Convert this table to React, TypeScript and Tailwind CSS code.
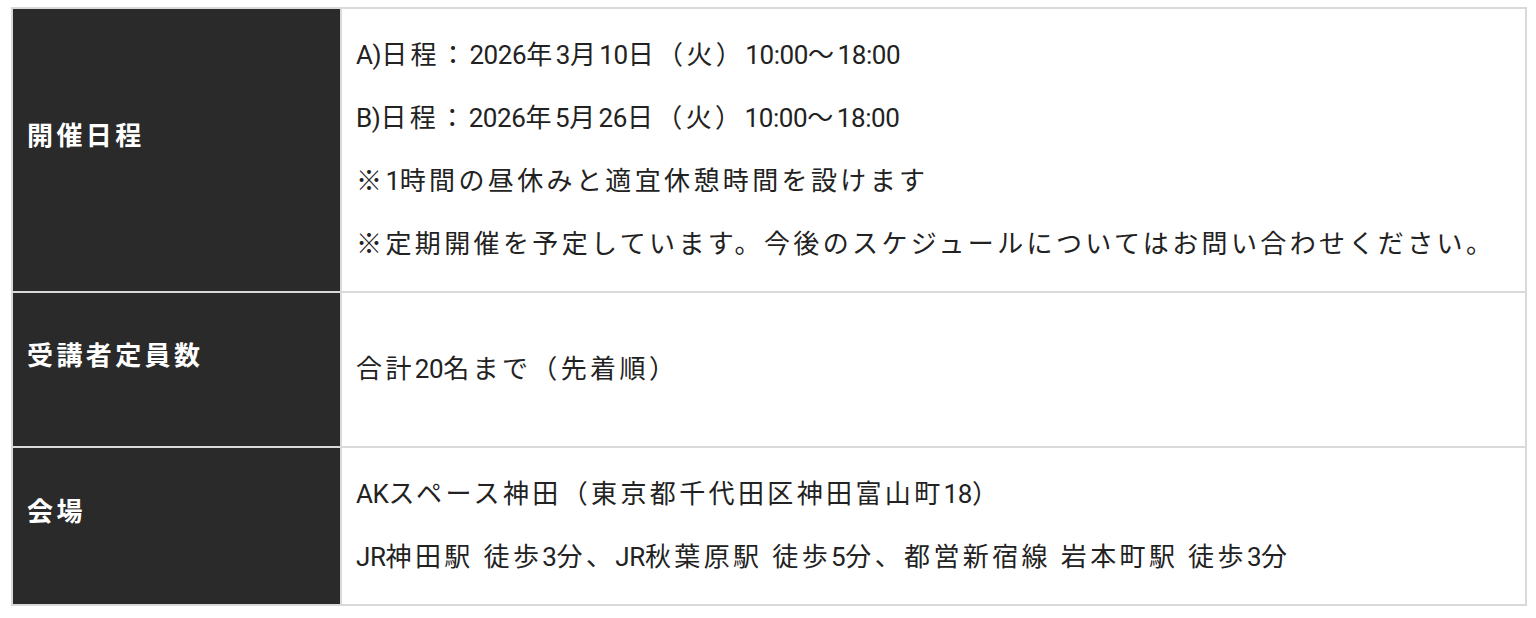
const rows = [
  {
    label: "開催日程",
    lines: [
      "A)日程：2026年3月10日（火）10:00～18:00",
      "B)日程：2026年5月26日（火）10:00～18:00",
      "※1時間の昼休みと適宜休憩時間を設けます",
      "※定期開催を予定しています。今後のスケジュールについてはお問い合わせください。",
    ],
  },
  {
    label: "受講者定員数",
    lines: ["合計20名まで（先着順）"],
  },
  {
    label: "会場",
    lines: [
      "AKスペース神田（東京都千代田区神田富山町18）",
      "JR神田駅 徒歩3分、JR秋葉原駅 徒歩5分、都営新宿線 岩本町駅 徒歩3分",
    ],
  },
]

// latin runs sit tighter than the spaced-out kana/kanji
function Spaced({ text }: { text: string }) {
  const parts = text.match(/[!-~]+|[^!-~]+/g) ?? []
  return (
    <>
      {parts.map((part, i) =>
        /^[!-~]+$/.test(part) ? (
          <span key={i} className="tracking-[-0.015em]">
            {part}
          </span>
        ) : (
          <span key={i}>{part}</span>
        )
      )}
    </>
  )
}

export default function App() {
  return (
    <div
      className="min-h-screen bg-white pt-[7px] pl-[11px]"
      style={{ fontFamily: 'Roboto, "Noto Sans CJK JP", sans-serif' }}
    >
      <div className="w-[1516px] border-2 border-[#d9d9d9]">
        {rows.map((row, i) => (
          <div
            key={row.label}
            className={`flex min-h-[155px] ${i > 0 ? "border-t-2 border-[#d9d9d9]" : ""}`}
          >
            {/* Label cell */}
            <div className="flex w-[329px] shrink-0 items-center border-r-2 border-[#d9d9d9] bg-[#2a2a2a] pb-[27px] pl-[14px]">
              <span className="text-[26px] font-bold tracking-[0.13em] text-white">
                {row.label}
              </span>
            </div>

            {/* Content cell */}
            <div className="flex flex-1 flex-col justify-center py-[15px] pl-[14px]">
              {row.lines.map((line) => (
                <p
                  key={line}
                  className="text-[26px] leading-[63px] tracking-[0.13em] text-[#222]"
                >
                  <Spaced text={line} />
                </p>
              ))}
            </div>
          </div>
        ))}
      </div>
    </div>
  )
}
